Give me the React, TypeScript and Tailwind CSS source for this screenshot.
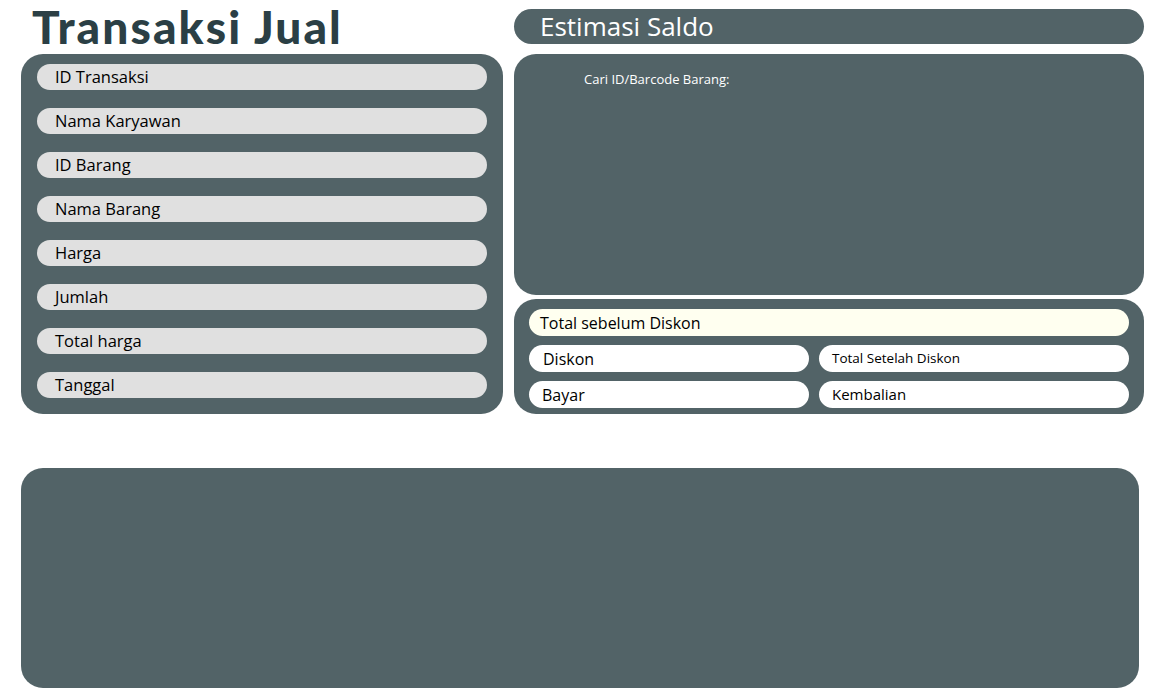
export default function App() {
  const leftFields = [
    "ID Transaksi",
    "Nama Karyawan",
    "ID Barang",
    "Nama Barang",
    "Harga",
    "Jumlah",
    "Total harga",
    "Tanggal",
  ];

  return (
    <div
      className="w-[1158px] h-[696px] bg-white relative"
      style={{ fontFamily: '"Open Sans", "Noto Sans", sans-serif' }}
    >
      <div className="flex gap-[11px] pl-[21px] pt-[9px]">
        {/* left column */}
        <div className="w-[482px] flex flex-col">
          <h1
            className="h-[45px] -mt-[8px] pl-[11px] text-[46px] leading-[52px] font-black text-[#2b3f45] tracking-[2.1px]"
            style={{ fontFamily: '"Lato", sans-serif' }}
          >
            Transaksi Jual
          </h1>
          <div className="mt-[8px] h-[360px] bg-[#526367] rounded-[22px] px-[16px] pt-[10px] flex flex-col gap-[18px]">
            {leftFields.map((f) => (
              <div
                key={f}
                className="h-[26px] shrink-0 rounded-full bg-[#e0e0e0] pl-[18px] flex items-center text-[16.5px] text-black"
              >
                {f}
              </div>
            ))}
          </div>
        </div>

        {/* right column */}
        <div className="w-[630px] flex flex-col">
          <div className="h-[35px] rounded-full bg-[#526367] pl-[26px] flex items-center text-white text-[26px]">
            Estimasi Saldo
          </div>
          <div className="mt-[10px] h-[241px] bg-[#526367] rounded-[22px] pl-[70px] pt-[16px] text-white text-[13px]">
            Cari ID/Barcode Barang:
          </div>
          <div className="mt-[4px] h-[115px] bg-[#526367] rounded-[22px] px-[15px] pt-[10px] pb-[6px] flex flex-col gap-[9px]">
            <div className="h-[27px] shrink-0 rounded-full bg-[#fffff0] pl-[11px] flex items-center text-[16px] text-black">
              Total sebelum Diskon
            </div>
            <div className="flex gap-[10px] shrink-0">
              <div className="w-[280px] h-[27px] rounded-full bg-white pl-[14px] flex items-center text-[16px] text-black">
                Diskon
              </div>
              <div className="flex-1 h-[27px] rounded-full bg-white pl-[13px] flex items-center text-[13.5px] text-black">
                Total Setelah Diskon
              </div>
            </div>
            <div className="flex gap-[10px] shrink-0">
              <div className="w-[280px] h-[27px] rounded-full bg-white pl-[13px] flex items-center text-[16px] text-black">
                Bayar
              </div>
              <div className="flex-1 h-[27px] rounded-full bg-white pl-[13px] flex items-center text-[15px] text-black">
                Kembalian
              </div>
            </div>
          </div>
        </div>
      </div>

      <div className="ml-[21px] mt-[54px] w-[1118px] h-[220px] bg-[#526367] rounded-[22px]" />
    </div>
  );
}
